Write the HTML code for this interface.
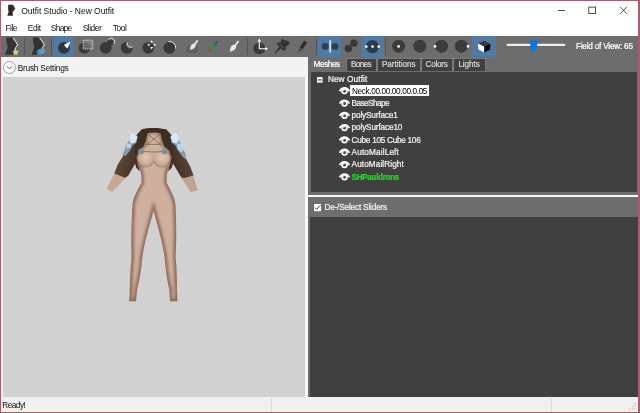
<!DOCTYPE html>
<html>
<head>
<meta charset="utf-8">
<title>Outfit Studio - New Outfit</title>
<style>
html,body{margin:0;padding:0;}
body{width:640px;height:413px;overflow:hidden;background:#a3606c;position:relative;
 font-family:"Liberation Sans","DejaVu Sans",sans-serif;font-size:8px;color:#000;}
#root{position:absolute;left:0;top:0;width:640px;height:413px;overflow:hidden;filter:blur(0.45px);}
.abs{position:absolute;}
.t{position:absolute;white-space:nowrap;line-height:10px;}
.ti,.tabt,.w{-webkit-text-stroke:0.22px currentColor;}
#win{left:1px;top:0.9px;width:637.4px;height:410.6px;background:#fff;}
.menu{top:23px;font-size:8.4px;color:#111;}
#toolbar{left:1px;top:36.3px;width:637.4px;height:20.5px;background:#6d6d6d;}
.sep{position:absolute;top:38px;width:1px;height:17px;background:#555;}
.sel{position:absolute;top:36.3px;height:20.5px;background:#507aa3;}
#brush{left:1px;top:57px;width:307.4px;height:20.4px;background:#f3f3f3;}
#view{left:1px;top:77.4px;width:304.6px;height:319.6px;background:#d1d1d1;}
#vsash{left:305.4px;top:77px;width:2.8px;height:320px;background:#f8f8f8;}
#right{left:308.2px;top:56.8px;width:330px;height:339.8px;background:#6d6d6d;}
#tree{left:310.8px;top:71.8px;width:326.1px;height:120.4px;background:#404040;}
#hsash{left:306px;top:194.6px;width:332.2px;height:2.5px;background:#f8f8f8;}
#slhead{left:308.2px;top:197px;width:330px;height:19.7px;background:#6e6e6e;}
#sliders{left:309.8px;top:216.7px;width:328.4px;height:179.9px;background:#404040;}
#status{left:1px;top:396.5px;width:637.4px;height:15px;background:#f0f0f0;}
.tab{position:absolute;top:58px;height:12px;background:#404040;border:1px solid #7a7a7a;border-bottom:none;box-sizing:border-box;height:13px;}
.tabt{top:60px;font-size:8.2px;color:#d8d8d8;}
.ti{font-size:8.2px;color:#f4f4f4;left:351px;}
</style>
</head>
<body>
<div id="root">
<div id="win" class="abs"></div>

<!-- title bar -->
<svg class="abs" style="left:5px;top:3px" width="14" height="15" viewBox="5 3 14 15">
  <path d="M8.2 4.8 L13 4.8 C13.6 6 14.4 7 15 8.4 L14.6 9.8 L13.6 10.4 L13.4 11.6 L12.6 12 L13 15.7 L7.3 15.7 L8.6 12 C8 9.6 8 7 8.2 4.8 Z" fill="#2b2b2b"/>
  <path d="M13.4 5.6 C14 6.6 14.6 7.4 15 8.4 L14.7 9.8" fill="none" stroke="#b9822e" stroke-width="0.7"/>
</svg>
<div class="t" style="left:21.2px;letter-spacing:-0.041px;top:6px;font-size:8.5px;color:#111;">Outfit Studio - New Outfit</div>
<svg class="abs" style="left:540px;top:1px" width="98" height="20" viewBox="0 0 98 20">
  <path d="M18 9.5 H25" stroke="#222" stroke-width="0.8" fill="none"/>
  <rect x="48.8" y="6.1" width="6.8" height="6.4" stroke="#222" stroke-width="0.8" fill="none"/>
  <path d="M80 5.8 L87 12.8 M87 5.8 L80 12.8" stroke="#222" stroke-width="0.8" fill="none"/>
</svg>

<!-- menu -->
<div class="t menu" style="left:5.5px;letter-spacing:-0.500px;">File</div>
<div class="t menu" style="left:27.8px;letter-spacing:-0.379px;">Edit</div>
<div class="t menu" style="left:50.8px;letter-spacing:-0.705px;">Shape</div>
<div class="t menu" style="left:82.7px;letter-spacing:-0.484px;">Slider</div>
<div class="t menu" style="left:112.7px;letter-spacing:-0.392px;">Tool</div>

<!-- toolbar -->
<div id="toolbar" class="abs"></div>
<div class="sel" style="left:52.6px;width:21.6px"></div>
<div class="sel" style="left:318px;width:23px"></div>
<div class="sel" style="left:361.6px;width:22.6px"></div>
<div class="sel" style="left:471.5px;width:24px"></div>
<div class="sep" style="left:23.5px"></div>
<div class="sep" style="left:51px"></div>
<div class="sep" style="left:247px"></div>
<div class="sep" style="left:315.5px"></div>
<div class="sep" style="left:385px"></div>
<svg id="icons" class="abs" style="left:0;top:36px" width="640" height="21" viewBox="0 36 640 21">
  <defs>
    <linearGradient id="cb" gradientUnits="userSpaceOnUse" x1="0" y1="0" x2="0" y2="-13.4">
      <stop offset="0" stop-color="#c03028"/><stop offset="0.18" stop-color="#b83a2a"/><stop offset="0.3" stop-color="#3a983a"/><stop offset="0.6" stop-color="#2f8a3c"/><stop offset="0.72" stop-color="#2c5a80"/><stop offset="1" stop-color="#27408c"/>
    </linearGradient>
    <linearGradient id="bl" x1="0" y1="0" x2="1" y2="0">
      <stop offset="0" stop-color="#2f86c4"/><stop offset="0.6" stop-color="#56a4d8"/><stop offset="1" stop-color="#6f9cc0" stop-opacity="0.6"/>
    </linearGradient>
  </defs>
  <!-- 1 new project -->
  <path d="M6.4 37.6 L12.8 37.6 C14.6 40 16.2 42.4 17.6 45 L15.6 47.4 L15 49.6 L13.4 50.6 L13.2 54.8 L5 54.8 L7.8 47 C6.6 44 6.2 40.6 6.4 37.6 Z" fill="#333"/>
  <path d="M13 37.8 C14.8 40 16.4 42.4 17.7 45 L15.7 47.4 L15.1 49.6 L14.2 50" fill="none" stroke="#f4f4f4" stroke-width="1"/>
  <path d="M15.7 49 L16.7 51.1 L19 51.4 L17.3 53 L17.8 55.3 L15.7 54.2 L13.6 55.3 L14.1 53 L12.4 51.4 L14.7 51.1 Z" fill="#e2cf62"/>
  <!-- 2 load -->
  <path d="M33 37.6 L39.4 37.6 C41.2 40 43 42.4 44.3 45 L42.4 47.4 L41.8 49 L38.6 50.6 L38 54.8 L31.6 54.8 L34.4 47 C33.2 44 32.8 40.6 33 37.6 Z" fill="#333"/>
  <path d="M39.6 37.8 C41.4 40 43 42.4 44.4 45 L42.5 47.4 L42 48.8" fill="none" stroke="#f4f4f4" stroke-width="1"/>
  <path d="M36.6 51.6 C37.6 49.2 41 48 44.8 48.8 L45.6 51.6 C43.6 54.2 39.6 55 37 54.4 Z" fill="url(#bl)"/>
  <!-- 3 select brush -->
  <circle cx="63.9" cy="47.9" r="5.9" fill="#2e3540"/>
  <path d="M64.1 44.8 L70.4 41.4 L67.6 48.4 C66.4 48 64.6 46.4 64.1 44.8 Z" fill="#fff"/>
  <!-- 4 mask -->
  <circle cx="84.4" cy="48" r="5.8" fill="#3a3a3a"/>
  <rect x="83.2" y="40.2" width="9.6" height="8.8" fill="#8a8a8a" fill-opacity="0.6" stroke="#eee" stroke-width="0.9" stroke-dasharray="1.1 1"/>
  <!-- 5 inflate -->
  <circle cx="105.7" cy="47.9" r="5.9" fill="#383838"/>
  <circle cx="110.5" cy="42.6" r="3.1" fill="#383838"/>
  <path d="M108.4 39.4 A3.6 3.6 0 0 1 113.8 44.2" fill="none" stroke="#eaeaea" stroke-width="0.9"/>
  <!-- 6 deflate -->
  <path d="M127.4 41.8 A6 6 0 1 0 132.8 47.2 A3.6 3.6 0 0 1 127.4 41.8 Z" fill="#383838"/>
  <path d="M127.3 42.4 A3.8 3.8 0 0 0 132.6 46.9" fill="none" stroke="#eaeaea" stroke-width="0.9"/>
  <!-- 7 move -->
  <circle cx="148.3" cy="47.8" r="5.9" fill="#383838"/>
  <path d="M151.7 40.2 L153.1 42.6 L150.3 42.6 Z M151.7 49.4 L153.1 47 L150.3 47 Z M147.1 44.8 L149.5 43.4 L149.5 46.2 Z M156.3 44.8 L153.9 43.4 L153.9 46.2 Z" fill="#fff"/>
  <!-- 8 smooth -->
  <circle cx="169.4" cy="47.8" r="6" fill="#383838"/>
  <path d="M168.4 41.6 A6.4 6.4 0 0 1 175.7 48.6" fill="none" stroke="#e0e0e0" stroke-width="1"/>
  <!-- 9 weight brush -->
  <path d="M186.4 47 L192 44.4 L198 47.4 L197.4 53 L186.4 53 Z" fill="#606060"/>
  <path transform="translate(190.2 49.8) rotate(38.8)" d="M0 0 C-1.68 -1.86 -2.31 -3.72 -2.10 -5.36 C-1.89 -6.70 -1.0 -7.29 -0.95 -7.44 L-0.95 -12.00 L0.95 -12.00 L0.95 -7.44 C1.0 -7.29 1.89 -6.70 2.10 -5.36 C2.31 -3.72 1.68 -1.86 0 0 Z" fill="#e6e6e6"/>
  <!-- 10 color brush -->
  <path transform="translate(209 52) rotate(38.8)" d="M0 0 C-2.00 -2.08 -2.75 -4.15 -2.50 -5.98 C-2.25 -7.48 -1.0 -8.14 -0.95 -8.31 L-0.95 -13.40 L0.95 -13.40 L0.95 -8.31 C1.0 -8.14 2.25 -7.48 2.50 -5.98 C2.75 -4.15 2.00 -2.08 0 0 Z" fill="url(#cb)"/>
  <!-- 11 alpha brush -->
  <path transform="translate(230 51.8) rotate(38.8)" d="M0 0 C-1.92 -2.11 -2.64 -4.22 -2.40 -6.07 C-2.16 -7.59 -1.0 -8.26 -0.95 -8.43 L-0.95 -13.60 L0.95 -13.60 L0.95 -8.43 C1.0 -8.26 2.16 -7.59 2.40 -6.07 C2.64 -4.22 1.92 -2.11 0 0 Z" fill="#e6e6e6"/>
  <!-- 12 transform -->
  <circle cx="259.3" cy="48.4" r="5.9" fill="#383838"/>
  <path d="M259.3 41 L259.3 48.7 L266 48.7" fill="none" stroke="#fff" stroke-width="1.1"/>
  <path d="M259.3 38.6 L261 41.4 L257.6 41.4 Z M268 48.7 L265.2 47 L265.2 50.4 Z" fill="#fff"/>
  <!-- 13 pin -->
  <path d="M281.6 39 L289 41.4 L289.6 43.4 L285.8 47 L285.6 50.2 L283.4 50.6 L281 48.4 L275.2 53.4 L274.6 52.8 L279.4 46.8 L277.2 44.6 L277.4 42.6 L280.8 42.2 Z" fill="#343434"/>
  <path d="M279.6 44.4 L283.8 48.4" stroke="#6d6d6d" stroke-width="0.9"/>
  <!-- 14 pencil -->
  <path d="M304.2 40.4 L307 42.4 L302.4 49.8 L299.6 47.8 Z" fill="#2e2e2e"/>
  <path d="M299.3 48.5 L301.7 50.3 L298.4 52.2 Z" fill="#3c3c3c"/>
  <!-- 15 mirror -->
  <circle cx="325.2" cy="46.4" r="3.4" fill="#2f3e50"/>
  <circle cx="335" cy="46.4" r="3.4" fill="#2f3e50"/>
  <rect x="329.5" y="40" width="1.3" height="12.6" fill="#fff"/>
  <!-- 16 connected -->
  <circle cx="348.4" cy="48.5" r="3.7" fill="#383838"/>
  <circle cx="353.8" cy="43.2" r="3.6" fill="#383838"/>
  <!-- 17 global collision -->
  <circle cx="372.4" cy="46.6" r="6.6" fill="#2c3a4a"/>
  <circle cx="366.3" cy="46.6" r="1.3" fill="#fff"/><circle cx="372.5" cy="46.6" r="1.3" fill="#fff"/><circle cx="378.7" cy="46.6" r="1.3" fill="#fff"/>
  <!-- 18-21 -->
  <circle cx="398.6" cy="46.2" r="6.5" fill="#3c3c3c"/><circle cx="398.6" cy="46.4" r="1.3" fill="#fff"/>
  <circle cx="419.8" cy="46.2" r="6.5" fill="#3c3c3c"/>
  <circle cx="441.5" cy="46.2" r="6.5" fill="#3c3c3c"/><circle cx="435" cy="46.4" r="1.3" fill="#fff"/>
  <circle cx="461.4" cy="46.2" r="6.5" fill="#3c3c3c"/><circle cx="468" cy="46.4" r="1.3" fill="#fff"/>
  <!-- 22 cube -->
  <path d="M478 43.6 L484.4 40.8 L490.4 43.8 L484.2 46.8 Z" fill="#3a3a3a"/>
  <path d="M478 43.6 L484.2 46.8 L484.2 52.6 L478.4 49.6 Z" fill="#fff"/>
  <path d="M484.2 46.8 L490.4 43.8 L490 49.8 L484.2 52.6 Z" fill="#0a0a0a"/>
  <!-- slider -->
  <rect x="506.8" y="43.8" width="58.4" height="2.2" rx="0.6" fill="#ececec"/>
  <path d="M530.3 40.6 C530.3 40.2 530.6 39.9 531 39.9 L536.5 39.9 C536.9 39.9 537.2 40.2 537.2 40.6 L537.2 48.8 L533.75 51.8 L530.3 48.8 Z" fill="#0a78d8"/>
</svg>
<div class="t w" style="left:575.9px;letter-spacing:-0.206px;top:42px;font-size:8.2px;color:#fff;">Field of View: 65</div>

<!-- left -->
<div id="brush" class="abs"></div>
<svg class="abs" style="left:2px;top:60px" width="15" height="15" viewBox="2 60 15 15">
  <circle cx="9.5" cy="67.5" r="6" fill="#fafafa" stroke="#8c8c8c" stroke-width="0.8"/>
  <path d="M6.8 66.2 L9.5 68.9 L12.2 66.2" fill="none" stroke="#555" stroke-width="0.9"/>
</svg>
<div class="t" style="left:17.7px;letter-spacing:-0.263px;top:63px;font-size:8.4px;color:#111;">Brush Settings</div>
<div id="view" class="abs"></div>
<div id="vsash" class="abs"></div>
<div class="abs" style="left:1px;top:77px;width:1.6px;height:320px;background:#ededed"></div>
<svg id="fig" class="abs" style="left:95px;top:120px" width="115" height="190" viewBox="95 120 115 190">
  <defs>
    <linearGradient id="skin" x1="0" y1="0" x2="1" y2="0">
      <stop offset="0" stop-color="#a98571"/><stop offset="0.22" stop-color="#c8a995"/><stop offset="0.5" stop-color="#d0b39f"/><stop offset="0.78" stop-color="#c6a793"/><stop offset="1" stop-color="#a37f6b"/>
    </linearGradient>
    <linearGradient id="legL" x1="0" y1="0" x2="1" y2="0">
      <stop offset="0" stop-color="#b08e7a"/><stop offset="0.45" stop-color="#ceb19d"/><stop offset="1" stop-color="#a58370"/>
    </linearGradient>
    <linearGradient id="legR" x1="0" y1="0" x2="1" y2="0">
      <stop offset="0" stop-color="#a58370"/><stop offset="0.55" stop-color="#ccae9a"/><stop offset="1" stop-color="#ac8a76"/>
    </linearGradient>
    <linearGradient id="slvL" x1="0" y1="0" x2="1" y2="0.6">
      <stop offset="0" stop-color="#76604e"/><stop offset="0.45" stop-color="#5c4737"/><stop offset="1" stop-color="#443226"/>
    </linearGradient>
    <linearGradient id="slvR" x1="1" y1="0" x2="0" y2="0.6">
      <stop offset="0" stop-color="#6e5848"/><stop offset="0.45" stop-color="#574333"/><stop offset="1" stop-color="#412f24"/>
    </linearGradient>
    <radialGradient id="hl" cx="0.5" cy="0.4" r="0.6">
      <stop offset="0" stop-color="#dfc6b6"/><stop offset="0.7" stop-color="#cdb09c"/><stop offset="1" stop-color="#b79782"/>
    </radialGradient>
  </defs>
  <!-- forearms -->
  <path d="M114.4 173.6 L126 177.8 L112 192 L106.6 188.4 Z" fill="#c6a794"/>
  <path d="M193.2 175.8 L181.4 178 L190.8 192.2 L197.8 190 Z" fill="#c2a390"/>
  <!-- body -->
  <clipPath id="bodyclip"><path d="M146.4 131 L144.6 144 C140 147 136.6 151.6 136.2 157.6 C136 162 138.4 166.4 140.4 170 C141.4 175 141.8 179 141.4 183 C138 190 133.6 196 132.6 204 C131.4 222 131 240 131.6 257 C130.4 268 130 282 129.6 296 L129 301.2 L136 301.2 L137 290 C139.6 280 141.4 268 142.4 257 C145 240 150 224 153.6 210.6 C157 224 162 240 164.6 257 C165.4 268 167 280 169.4 290 L170 301.2 L177.4 301.2 L177.2 296 C177 282 176.8 268 175.6 257 C176.6 240 176.4 222 175.4 204 C174.4 196 170 190 166.8 183 C166.4 179 166.8 175 167.8 170 C169.8 166.4 172 162 171.8 157.6 C171.4 151.6 168 147 163.4 144 L161.4 131 Z"/></clipPath>
  <filter id="b2" x="-20%" y="-20%" width="140%" height="140%"><feGaussianBlur stdDeviation="1.8"/></filter>
  <g clip-path="url(#bodyclip)">
    <rect x="120" y="125" width="70" height="180" fill="#cfb09f"/>
    <path d="M146.4 131 L144.6 144 C140 147 136.6 151.6 136.2 157.6 C136 162 138.4 166.4 140.4 170 C141.4 175 141.8 179 141.4 183 C138 190 133.6 196 132.6 204 C131.4 222 131 240 131.6 257 C130.4 268 130 282 129.6 296 L129 301.2 L136 301.2 L137 290 C139.6 280 141.4 268 142.4 257 C145 240 150 224 153.6 210.6 C157 224 162 240 164.6 257 C165.4 268 167 280 169.4 290 L170 301.2 L177.4 301.2 L177.2 296 C177 282 176.8 268 175.6 257 C176.6 240 176.4 222 175.4 204 C174.4 196 170 190 166.8 183 C166.4 179 166.8 175 167.8 170 C169.8 166.4 172 162 171.8 157.6 C171.4 151.6 168 147 163.4 144 L161.4 131 Z" fill="none" stroke="#8f6a58" stroke-width="5" filter="url(#b2)"/>
  </g>
  <ellipse cx="145.6" cy="158.6" rx="7.6" ry="8" fill="url(#hl)"/>
  <ellipse cx="162.2" cy="158.6" rx="7.6" ry="8" fill="url(#hl)"/>
  <path d="M139 162 C141 168.6 150.6 169 153.8 161 C157 169 166.8 168.6 168.8 162" fill="none" stroke="#9c7a67" stroke-width="1.1" opacity="0.75"/>
  <!-- jacket lapels and collar -->
  <path d="M141.6 129.6 L148 130.6 L146 140 L143.6 146.4 L138.6 150.6 L136.4 157.6 L137.8 164.6 L140.2 171.6 L136.4 168 L134 160 L132.8 148 L135.6 136 Z" fill="#3f2e22"/>
  <path d="M166.4 129.6 L160 130.6 L162 140 L164.4 146.4 L169.4 150.6 L171.6 157.6 L170.2 164.6 L167.8 171.6 L171.6 168 L174 160 L175.2 148 L172.4 136 Z" fill="#3f2e22"/>
  <path d="M141.6 129.4 C148 127.4 160 127.4 166.4 129.6 L164 134.4 C158 131.8 150 131.8 144 134.4 Z" fill="#3c2b21"/>
    <path d="M141 151.4 L153.8 152 L166.6 151.4 M146.4 144.4 L161.2 144.4 M147.4 134 L160 144 M160.4 134 L147.6 144" fill="none" stroke="#5a463c" stroke-width="0.6"/>
  <ellipse cx="141" cy="151.4" rx="3" ry="2.8" fill="#7f8e9c"/>
  <ellipse cx="164.6" cy="151.4" rx="3" ry="2.8" fill="#7f8e9c"/>
  <!-- sleeves -->
  <path d="M137 135 L134.4 150 L136.4 161.6 L128 176 L125.2 177.8 L114.2 173.4 L118 164 L122.8 156.4 L128 146 L132 138 Z" fill="url(#slvL)"/>
  <path d="M171 135 L173.6 150 L171.8 161.6 L181.4 177.6 L184 178 L193.6 175.6 L190 166 L184.4 156 L179.6 146 L175.6 138 Z" fill="url(#slvR)"/>
  <!-- pauldrons -->
  <path d="M129.6 134 L134.4 133 L137.6 136.6 L136.6 142.6 L132.4 145.6 L130.4 150 L125.6 156 L122.6 154.4 L125.4 147.6 L127 143.6 L129 141 Z" fill="#879caf"/>
  <path d="M129.8 133.8 L134.4 132.8 L137.4 137 L135.4 142.4 L130.8 143.4 L129 139 Z" fill="#d4e9f8"/>
  <path d="M126.4 143.6 L130.8 143.8 L131 147.6 L127 148.6 Z" fill="#b9d3e6"/>
  <path d="M178.4 134 L173.6 133 L170.4 136.6 L171.4 142.6 L175.6 145.6 L177.6 150 L182.4 156.6 L185.6 159.6 L186 155 L182.6 147.6 L181 143.6 L179 141 Z" fill="#879caf"/>
  <path d="M178.2 133.8 L173.6 132.8 L170.6 137 L172.6 142.4 L177.2 143.4 L179 139 Z" fill="#d4e9f8"/>
  <path d="M181.6 143.6 L177.2 143.8 L177.4 148 L181 152.6 L183.6 150 Z" fill="#b9d3e6"/>
</svg>

<!-- right -->
<div id="right" class="abs"></div>
<div class="tab" style="left:346px;width:31px"></div>
<div class="tab" style="left:377px;width:44px"></div>
<div class="tab" style="left:421px;width:32px"></div>
<div class="tab" style="left:453px;width:33px"></div>
<div class="t tabt" style="left:313.6px;letter-spacing:-0.414px;color:#fff">Meshes</div>
<div class="t tabt" style="left:351.0px;letter-spacing:-0.680px;">Bones</div>
<div class="t tabt" style="left:381.9px;letter-spacing:-0.049px;">Partitions</div>
<div class="t tabt" style="left:425.6px;letter-spacing:-0.274px;">Colors</div>
<div class="t tabt" style="left:458.4px;letter-spacing:-0.092px;">Lights</div>
<div id="tree" class="abs"></div>
<div id="hsash" class="abs"></div>
<div id="slhead" class="abs"></div>
<div id="sliders" class="abs"></div>

<!-- tree items -->
<svg class="abs" style="left:316px;top:76px" width="8" height="8" viewBox="316 76 8 8"><rect x="317" y="77" width="5.6" height="5.7" fill="#f0f0f0"/><rect x="318.1" y="79.4" width="3.4" height="1" fill="#333"/></svg>
<div class="t ti" style="left:327.9px;letter-spacing:0.130px;top:75px;">New Outfit</div>
<div class="abs" style="left:350px;top:85.2px;width:79px;height:11.2px;background:#fff"></div>
<div class="t ti" style="left:352.0px;letter-spacing:-0.350px;top:87px;color:#000;-webkit-text-stroke:0">Neck.00.00.00.00.0.05</div>
<div class="t ti" style="left:351.6px;letter-spacing:-0.543px;top:99px;">BaseShape</div>
<div class="t ti" style="left:351.6px;letter-spacing:-0.154px;top:111px;">polySurface1</div>
<div class="t ti" style="left:351.6px;letter-spacing:-0.129px;top:123px;">polySurface10</div>
<div class="t ti" style="left:351.6px;letter-spacing:-0.262px;top:136px;">Cube 105 Cube 106</div>
<div class="t ti" style="left:351.6px;letter-spacing:0.153px;top:148px;">AutoMailLeft</div>
<div class="t ti" style="left:351.6px;letter-spacing:0.103px;top:160px;">AutoMailRight</div>
<div class="t ti" style="left:351.6px;letter-spacing:-0.362px;top:173px;color:#19e019;font-weight:bold">SHPauldrons</div>

<svg id="eyes" class="abs" style="left:338px;top:84px" width="14" height="100" viewBox="338 84 14 100">
  <g transform="translate(344.5 90.6)"><path d="M-5.6 0.3 C-3.8 -4.8 3.8 -4.8 5.6 0.3 L4.3 1.1 C2.6 -2 -2.6 -2 -4.3 1.1 Z" fill="#fff"/><circle cx="0" cy="0.5" r="2.4" fill="none" stroke="#fff" stroke-width="1.7"/><circle cx="-0.6" cy="0" r="0.5" fill="#fff"/></g>
  <g transform="translate(344.5 102.9)"><path d="M-5.6 0.3 C-3.8 -4.8 3.8 -4.8 5.6 0.3 L4.3 1.1 C2.6 -2 -2.6 -2 -4.3 1.1 Z" fill="#fff"/><circle cx="0" cy="0.5" r="2.4" fill="none" stroke="#fff" stroke-width="1.7"/><circle cx="-0.6" cy="0" r="0.5" fill="#fff"/></g>
  <g transform="translate(344.5 115.2)"><path d="M-5.6 0.3 C-3.8 -4.8 3.8 -4.8 5.6 0.3 L4.3 1.1 C2.6 -2 -2.6 -2 -4.3 1.1 Z" fill="#fff"/><circle cx="0" cy="0.5" r="2.4" fill="none" stroke="#fff" stroke-width="1.7"/><circle cx="-0.6" cy="0" r="0.5" fill="#fff"/></g>
  <g transform="translate(344.5 127.5)"><path d="M-5.6 0.3 C-3.8 -4.8 3.8 -4.8 5.6 0.3 L4.3 1.1 C2.6 -2 -2.6 -2 -4.3 1.1 Z" fill="#fff"/><circle cx="0" cy="0.5" r="2.4" fill="none" stroke="#fff" stroke-width="1.7"/><circle cx="-0.6" cy="0" r="0.5" fill="#fff"/></g>
  <g transform="translate(344.5 139.8)"><path d="M-5.6 0.3 C-3.8 -4.8 3.8 -4.8 5.6 0.3 L4.3 1.1 C2.6 -2 -2.6 -2 -4.3 1.1 Z" fill="#fff"/><circle cx="0" cy="0.5" r="2.4" fill="none" stroke="#fff" stroke-width="1.7"/><circle cx="-0.6" cy="0" r="0.5" fill="#fff"/></g>
  <g transform="translate(344.5 152.1)"><path d="M-5.6 0.3 C-3.8 -4.8 3.8 -4.8 5.6 0.3 L4.3 1.1 C2.6 -2 -2.6 -2 -4.3 1.1 Z" fill="#fff"/><circle cx="0" cy="0.5" r="2.4" fill="none" stroke="#fff" stroke-width="1.7"/><circle cx="-0.6" cy="0" r="0.5" fill="#fff"/></g>
  <g transform="translate(344.5 164.4)"><path d="M-5.6 0.3 C-3.8 -4.8 3.8 -4.8 5.6 0.3 L4.3 1.1 C2.6 -2 -2.6 -2 -4.3 1.1 Z" fill="#fff"/><circle cx="0" cy="0.5" r="2.4" fill="none" stroke="#fff" stroke-width="1.7"/><circle cx="-0.6" cy="0" r="0.5" fill="#fff"/></g>
  <g transform="translate(344.5 176.7)"><path d="M-5.6 0.3 C-3.8 -4.8 3.8 -4.8 5.6 0.3 L4.3 1.1 C2.6 -2 -2.6 -2 -4.3 1.1 Z" fill="#fff"/><circle cx="0" cy="0.5" r="2.4" fill="none" stroke="#fff" stroke-width="1.7"/><circle cx="-0.6" cy="0" r="0.5" fill="#fff"/></g>
</svg>

<!-- sliders header -->
<svg class="abs" style="left:313px;top:202.5px" width="9" height="9" viewBox="0 0 9 9"><rect x="0.5" y="0.4" width="8" height="8.4" fill="#fff" stroke="#3a3a3a" stroke-width="0.6"/><path d="M2 4.6 L3.7 6.3 L7.2 2.4" fill="none" stroke="#3c3c3c" stroke-width="1"/></svg>
<div class="t w" style="left:324.4px;letter-spacing:-0.161px;top:203px;font-size:8.2px;color:#f4f4f4;">De-/Select Sliders</div>

<!-- status -->
<div id="status" class="abs"></div>
<div class="t" style="left:2.3px;letter-spacing:-0.491px;top:401px;font-size:8.2px;color:#111;">Ready!</div>
<div class="abs" style="left:271px;top:398px;width:1px;height:13px;background:#d9d9d9"></div>
<div class="abs" style="left:550.5px;top:398px;width:1px;height:13px;background:#d9d9d9"></div>
<svg class="abs" style="left:628px;top:402px" width="9" height="9" viewBox="0 0 9 9"><g fill="#b8b8b8"><rect x="6.4" y="1" width="1.2" height="1.2"/><rect x="6.4" y="3.7" width="1.2" height="1.2"/><rect x="3.7" y="3.7" width="1.2" height="1.2"/><rect x="6.4" y="6.4" width="1.2" height="1.2"/><rect x="3.7" y="6.4" width="1.2" height="1.2"/><rect x="1" y="6.4" width="1.2" height="1.2"/></g></svg>
</div>
</body>
</html>
